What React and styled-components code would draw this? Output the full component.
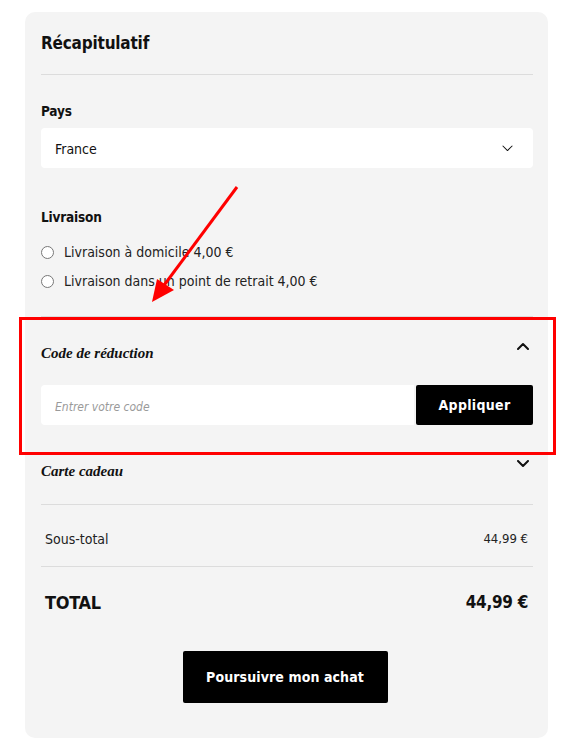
import React from 'react';
import styled, { createGlobalStyle } from 'styled-components';

const GlobalStyle = createGlobalStyle`
  * { box-sizing: border-box; }
  body {
    margin: 0;
    background: #ffffff;
    font-family: "DejaVu Sans Condensed", "DejaVu Sans", sans-serif;
    color: #111111;
  }
`;

const Chevron = ({ up, size = 12, weight = 1.6 }) => (
  <svg width={size} height={size / 2 + 2} viewBox="0 0 12 8" fill="none">
    <polyline
      points={up ? '1,7 6,2 11,7' : '1,1 6,6 11,1'}
      stroke="#111"
      strokeWidth={weight}
      strokeLinecap="round"
      strokeLinejoin="round"
    />
  </svg>
);

export default function App() {
  return (
    <>
      <GlobalStyle />
      <Page>
        <Card>
          <Header>
            <Title>Récapitulatif</Title>
          </Header>

          <Label $top={26}>Pays</Label>
          <Select>
            <span>France</span>
            <Chevron size={11} weight={1.1} />
          </Select>

          <Label $top={39}>Livraison</Label>
          <Options>
            <Option>
              <input type="radio" name="livraison" />
              Livraison à domicile 4,00 €
            </Option>
            <Option>
              <input type="radio" name="livraison" />
              Livraison dans un point de retrait 4,00 €
            </Option>
          </Options>

          <Accordion>
            <AccordionHead>
              <AccordionTitle>Code de réduction</AccordionTitle>
              <ChevronBox><Chevron up weight={2} /></ChevronBox>
            </AccordionHead>
            <CodeRow>
              <CodeInput placeholder="Entrer votre code" />
              <ApplyButton>Appliquer</ApplyButton>
            </CodeRow>
          </Accordion>

          <GiftHead>
            <AccordionTitle>Carte cadeau</AccordionTitle>
            <ChevronBox><Chevron weight={2} /></ChevronBox>
          </GiftHead>

          <SummaryRow>
            <span>Sous-total</span>
            <span>44,99 €</span>
          </SummaryRow>
          <TotalRow>
            <span>TOTAL</span>
            <span>44,99 €</span>
          </TotalRow>

          <Footer>
            <CheckoutButton>Poursuivre mon achat</CheckoutButton>
          </Footer>
        </Card>

        <Highlight />
        <Arrow width="582" height="755" viewBox="0 0 582 755">
          <line x1="237" y1="187" x2="162" y2="288" stroke="#ff0000" strokeWidth="3" />
          <polygon points="152,302 157,279 174,290" fill="#ff0000" />
        </Arrow>
      </Page>
    </>
  );
}

const Page = styled.div`
  position: relative;
  width: 582px;
  height: 755px;
  padding: 12px 34px 0 25px;
`;

const Card = styled.section`
  display: flex;
  flex-direction: column;
  background: #f4f4f4;
  border-radius: 10px;
  padding: 0 15px 35px 16px;
`;

const Header = styled.div`
  height: 63px;
  display: flex;
  align-items: center;
  border-bottom: 1px solid #dcdcdc;
  padding-bottom: 1px;
`;

const Title = styled.h1`
  margin: 0;
  font-size: 17px;
  font-weight: 700;
  letter-spacing: -0.2px;
`;

const Label = styled.div`
  margin-top: ${(p) => p.$top}px;
  height: 20px;
  line-height: 20px;
  font-size: 13.5px;
  font-weight: 700;
  letter-spacing: -0.2px;
`;

const Select = styled.div`
  margin-top: 7px;
  height: 40px;
  background: #ffffff;
  border-radius: 4px;
  display: flex;
  align-items: center;
  justify-content: space-between;
  padding: 2px 20px 0 14px;
  font-size: 14px;
`;

const Options = styled.div`
  display: flex;
  flex-direction: column;
  gap: 7px;
  margin-top: 14px;
  padding-bottom: 24px;
  border-bottom: 1px solid #dcdcdc;
`;

const Option = styled.label`
  display: flex;
  align-items: center;
  height: 22px;
  font-size: 14px;
  color: #222;

  input {
    margin: 0 10px 0 0;
    width: 13px;
    height: 13px;
  }
`;

const Accordion = styled.div`
  padding-top: 24px;
`;

const AccordionHead = styled.div`
  display: flex;
  justify-content: space-between;
  align-items: flex-start;
  height: 24px;
`;

const AccordionTitle = styled.span`
  font-family: "Liberation Serif", "Times New Roman", serif;
  font-style: italic;
  font-weight: 700;
  font-size: 15px;
  line-height: 24px;
`;

const ChevronBox = styled.span`
  display: flex;
  padding: 1px 4px 0 0;
`;

const CodeRow = styled.div`
  display: flex;
  gap: 2px;
  margin-top: 20px;
  height: 40px;
`;

const CodeInput = styled.input`
  flex: 1;
  border: none;
  outline: none;
  background: #ffffff;
  border-radius: 4px 0 0 4px;
  padding: 3px 14px 0;
  font-family: inherit;
  font-size: 12px;
  font-style: italic;

  &::placeholder {
    color: #9a9a9a;
  }
`;

const ApplyButton = styled.button`
  width: 117px;
  border: none;
  background: #000000;
  color: #ffffff;
  border-radius: 2px;
  font-family: inherit;
  font-size: 14px;
  font-weight: 700;
  letter-spacing: 0.3px;
`;

const GiftHead = styled(AccordionHead)`
  margin-top: 34px;
  height: 46px;
  border-bottom: 1px solid #dcdcdc;
`;

const SummaryRow = styled.div`
  display: flex;
  justify-content: space-between;
  align-items: center;
  height: 62px;
  padding: 6px 5px 0 4px;
  border-bottom: 1px solid #dcdcdc;
  font-size: 14px;
  color: #222;

  span:last-child {
    font-size: 13px;
  }
`;

const TotalRow = styled.div`
  display: flex;
  justify-content: space-between;
  align-items: center;
  height: 68px;
  padding: 2px 5px 0 4px;
  font-size: 18px;
  font-weight: 700;
  letter-spacing: -0.3px;

  span:last-child {
    font-size: 17px;
  }
`;

const Footer = styled.div`
  display: flex;
  justify-content: center;
  margin-top: 16px;
`;

const CheckoutButton = styled.button`
  width: 205px;
  height: 52px;
  border: none;
  border-radius: 2px;
  background: #000000;
  color: #ffffff;
  font-family: inherit;
  font-size: 14px;
  font-weight: 700;
  letter-spacing: 0.1px;
  margin-left: -4px;
`;

const Highlight = styled.div`
  position: absolute;
  left: 19px;
  top: 317px;
  width: 537px;
  height: 138px;
  border: 3px solid #ff0000;
  pointer-events: none;
`;

const Arrow = styled.svg`
  position: absolute;
  left: 0;
  top: 0;
  pointer-events: none;
`;
